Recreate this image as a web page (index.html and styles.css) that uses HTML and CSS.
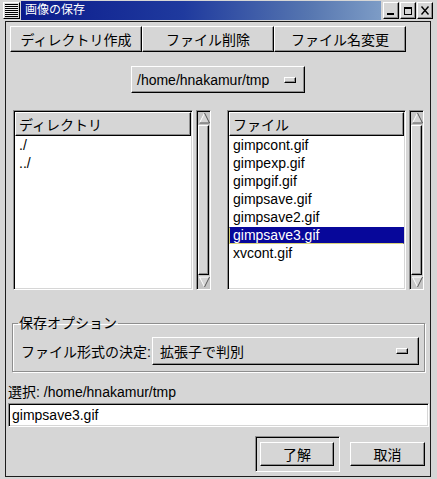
FILE: index.html
```html
<!DOCTYPE html>
<html lang="ja">
<head>
<meta charset="utf-8">
<title>画像の保存</title>
<link rel="stylesheet" href="styles.css">
</head>
<body>
<div class="window">
  <div class="titlebar">
    <div class="menu-btn"><div class="menu-lines"></div></div>
    <div class="title">画像の保存</div>
    <div class="wm-btns">
      <div class="wm-btn"><svg width="10" height="11" viewBox="0 0 10 11"><rect x="1" y="8" width="7" height="2" fill="#000"/></svg></div>
      <div class="wm-btn"><svg width="10" height="11" viewBox="0 0 10 11"><rect x="1.5" y="2.5" width="7" height="7" fill="none" stroke="#000"/><rect x="1" y="2" width="8" height="2" fill="#000"/></svg></div>
      <div class="wm-btn"><svg width="10" height="11" viewBox="0 0 10 11"><path d="M1.5 1.5 L8.5 9.5 M8.5 1.5 L1.5 9.5" stroke="#000" stroke-width="1.4" fill="none"/></svg></div>
    </div>
  </div>
  <div class="client">
    <div class="toolbar">
      <div class="btn tool">ディレクトリ作成</div>
      <div class="btn tool">ファイル削除</div>
      <div class="btn tool">ファイル名変更</div>
    </div>
    <div class="dir-row">
      <div class="btn option-menu path-menu"><span>/home/hnakamur/tmp</span><span class="indicator"></span></div>
    </div>
    <div class="lists">
      <div class="clist clist-dirs">
        <div class="clist-header">ディレクトリ</div>
        <div class="clist-body">
          <div class="row">./</div>
          <div class="row">../</div>
        </div>
      </div>
      <div class="sb">
        <svg class="arrow" width="11" height="12" viewBox="0 0 11 12"><polygon points="5.5,1 10.5,11 0.5,11" fill="#d6d6d6"/><path d="M5.5 1 L0.5 11" stroke="#fff" fill="none"/><path d="M5.5 1 L10.5 11 L0.5 11" stroke="#555" fill="none"/></svg>
        <div class="slider"></div>
        <svg class="arrow" width="11" height="12" viewBox="0 0 11 12"><polygon points="0.5,1 10.5,1 5.5,11" fill="#d6d6d6"/><path d="M0.5 1 L10.5 1 M0.5 1 L5.5 11" stroke="#fff" fill="none"/><path d="M10.5 1 L5.5 11" stroke="#555" fill="none"/></svg>
      </div>
      <div class="clist clist-files">
        <div class="clist-header">ファイル</div>
        <div class="clist-body">
          <div class="row">gimpcont.gif</div>
          <div class="row">gimpexp.gif</div>
          <div class="row">gimpgif.gif</div>
          <div class="row">gimpsave.gif</div>
          <div class="row">gimpsave2.gif</div>
          <div class="row selected">gimpsave3.gif</div>
          <div class="row">xvcont.gif</div>
        </div>
      </div>
      <div class="sb">
        <svg class="arrow" width="11" height="12" viewBox="0 0 11 12"><polygon points="5.5,1 10.5,11 0.5,11" fill="#d6d6d6"/><path d="M5.5 1 L0.5 11" stroke="#fff" fill="none"/><path d="M5.5 1 L10.5 11 L0.5 11" stroke="#555" fill="none"/></svg>
        <div class="slider"></div>
        <svg class="arrow" width="11" height="12" viewBox="0 0 11 12"><polygon points="0.5,1 10.5,1 5.5,11" fill="#d6d6d6"/><path d="M0.5 1 L10.5 1 M0.5 1 L5.5 11" stroke="#fff" fill="none"/><path d="M10.5 1 L5.5 11" stroke="#555" fill="none"/></svg>
      </div>
    </div>
    <fieldset class="options">
      <legend>保存オプション</legend>
      <div class="options-row">
        <span class="options-label">ファイル形式の決定:</span>
        <div class="btn option-menu type-menu"><span>拡張子で判別</span><span class="indicator"></span></div>
      </div>
    </fieldset>
    <div class="selection">選択: /home/hnakamur/tmp</div>
    <div class="entry">gimpsave3.gif</div>
    <div class="actions">
      <div class="default-frame"><div class="btn action">了解</div></div>
      <div class="btn action">取消</div>
    </div>
  </div>
</div>
</body>
</html>
```

FILE: styles.css
```css
* { box-sizing: border-box; }
html, body { margin: 0; padding: 0; }
body {
  background: #d6d6d6;
  font-family: "Liberation Sans", "Noto Sans CJK JP", sans-serif;
  font-size: 14px;
  color: #000;
}
.window {
  width: 437px;
  height: 479px;
  background: #d6d6d6;
  display: flex;
  flex-direction: column;
  overflow: hidden;
}
.titlebar {
  height: 21px;
  display: flex;
  align-items: flex-start;
  padding: 2px 4px 0 3px;
}
.menu-btn {
  width: 17px;
  height: 17px;
  border: 1px solid;
  border-color: #fff #000 #000 #fff;
  padding: 1px;
  background: #d6d6d6;
}
.menu-lines {
  width: 100%;
  height: 100%;
  background: repeating-linear-gradient(to bottom, #000 0, #000 1px, #f0f0f0 1px, #f0f0f0 2px);
}
.title {
  flex: 1;
  height: 19px;
  margin: -1px 2px 0 1px;
  padding-left: 4px;
  color: #fff;
  font-size: 12px;
  line-height: 19px;
  background: linear-gradient(90deg, #0b1b8c 0%, #1f3a9e 45%, #5676b0 80%, #7d9cc6 100%);
}
.wm-btns { display: flex; gap: 1px; }
.wm-btn {
  width: 16px;
  height: 17px;
  border: 1px solid;
  border-color: #fff #000 #000 #fff;
  box-shadow: inset -1px -1px #8e8e8e;
  display: flex;
  align-items: center;
  justify-content: center;
  background: #d6d6d6;
}
.client {
  margin-left: 5px;
  width: 426px;
  height: 456px;
  border: 1px solid #1c1c1c;
  display: flex;
  flex-direction: column;
}
.btn {
  background: #d6d6d6;
  border: 1px solid;
  border-color: #fff #000 #000 #fff;
  box-shadow: inset -1px -1px #8e8e8e;
  display: flex;
  align-items: center;
  justify-content: center;
  white-space: nowrap;
}
.toolbar { display: flex; margin: 4px 0 0 4px; }
.tool { width: 132px; height: 26px; }
.dir-row { margin-top: 14px; display: flex; justify-content: center; }
.option-menu { justify-content: space-between; }
.path-menu { width: 174px; height: 27px; padding: 0 8px 0 5px; }
.indicator {
  width: 12px;
  height: 6px;
  border: 1px solid;
  border-color: #fff #000 #000 #fff;
  box-shadow: inset -1px -1px #8e8e8e;
}
.lists { margin: 17px 0 0 7px; display: flex; height: 180px; }
.clist {
  border: 1px solid;
  border-color: #8e8e8e #fff #fff #8e8e8e;
  box-shadow: inset 1px 1px #000, inset -1px -1px #d6d6d6;
  padding: 1px;
  display: flex;
  flex-direction: column;
}
.clist-dirs { width: 180px; }
.clist-files { width: 179px; margin-left: 16px; }
.clist-header {
  height: 24px;
  border: 1px solid;
  border-color: #fff #000 #000 #fff;
  box-shadow: inset -1px -1px #8e8e8e;
  padding-left: 3px;
  display: flex;
  align-items: center;
}
.clist-body { flex: 1; background: #fff; padding-top: 1px; }
.row {
  height: 17px;
  margin-bottom: 1px;
  line-height: 17px;
  padding-left: 4px;
  white-space: nowrap;
}
.row.selected {
  background: #07079a;
  color: #fff;
  border: 1px solid #d8d27a;
  border-top-color: #07079a;
  border-right-color: #07079a;
  padding-left: 3px;
  line-height: 15px;
}
.sb {
  width: 15px;
  margin-left: 3px;
  border: 1px solid;
  border-color: #8e8e8e #fff #fff #8e8e8e;
  box-shadow: inset 1px 1px #000;
  background: #c6c6c6;
  padding: 1px 1px 1px 1px;
  display: flex;
  flex-direction: column;
}
.arrow { display: block; flex: none; margin-left: 1px; }
.slider {
  flex: 1;
  margin: 1px 0;
  border: 1px solid;
  border-color: #fff #000 #000 #fff;
  box-shadow: inset -1px -1px #8e8e8e;
  background: #d6d6d6;
}
.options {
  margin: 26px 0 0 6px;
  width: 413px;
  min-width: 0;
  border: 1px solid #8e8e8e;
  box-shadow: inset 1px 1px #fff, 1px 1px #fff;
  padding: 7px 5px 6px 8px;
}
.options legend {
  margin-left: -3px;
  padding: 0 1px;
  line-height: 14px;
  font-size: 14px;
}
.options-row { display: flex; align-items: center; }
.options-label { flex: 1; }
.type-menu { width: 267px; height: 28px; padding: 0 10px 0 7px; }
.selection { margin: 12px 0 0 2px; line-height: 16px; }
.entry {
  margin: 3px 0 0 2px;
  width: 421px;
  height: 24px;
  background: #fff;
  border: 1px solid;
  border-color: #8e8e8e #fff #fff #8e8e8e;
  box-shadow: inset 1px 1px #000, inset -1px -1px #d6d6d6;
  padding-left: 3px;
  display: flex;
  align-items: center;
}
.actions {
  display: flex;
  justify-content: flex-end;
  align-items: center;
  margin-top: 9px;
  padding-right: 5px;
  gap: 10px;
}
.default-frame {
  width: 85px;
  height: 36px;
  border: 1px solid;
  border-color: #8e8e8e #fff #fff #8e8e8e;
  box-shadow: inset 1px 1px #000;
  padding: 5px 5px 5px 4px;
}
.action { width: 74px; height: 24px; }
.actions > .action { width: 75px; }
```
